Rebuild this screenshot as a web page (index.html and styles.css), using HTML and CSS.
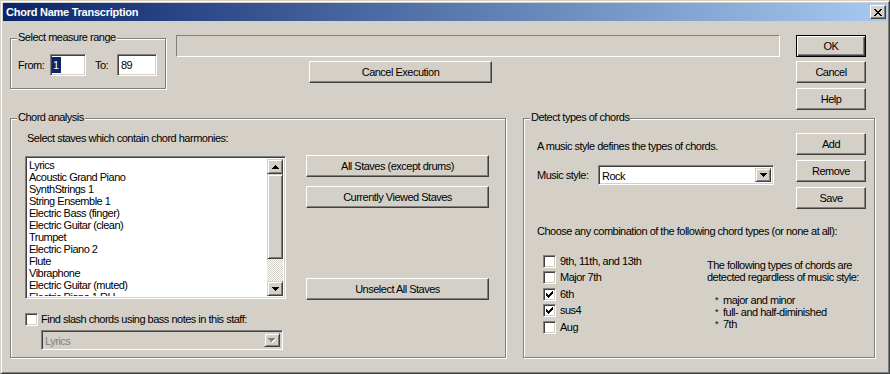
FILE: index.html
```html
<!DOCTYPE html>
<html>
<head>
<meta charset="utf-8">
<title>Chord Name Transcription</title>
<link rel="stylesheet" href="styles.css">
</head>
<body>
<div class="window">
  <div class="titlebar">
    <span class="title">Chord Name Transcription</span>
    <div class="close">
      <svg width="8" height="7" viewBox="0 0 8 7" shape-rendering="crispEdges"><path d="M0 0h2v1H0z M6 0h2v1H6z M1 1h2v1H1z M5 1h2v1H5z M2 2h4v1H2z M3 3h2v1H3z M2 4h4v1H2z M1 5h2v1H1z M5 5h2v1H5z M0 6h2v1H0z M6 6h2v1H6z" fill="#000"/></svg>
    </div>
  </div>
  <div class="client">
    <div class="top-row">
      <div class="group range">
        <span class="legend">Select measure range</span>
        <div class="range-row">
          <span class="lbl-from">From:</span>
          <div class="edit edit-from"><span class="sel">1</span></div>
          <span class="lbl-to">To:</span>
          <div class="edit edit-to">89</div>
        </div>
      </div>
      <div class="progress-col">
        <div class="progress"></div>
        <div class="btn exec">Cancel Execution</div>
      </div>
      <div class="dlg-btns">
        <div class="btn default">OK</div>
        <div class="btn btn-cancel">Cancel</div>
        <div class="btn btn-help">Help</div>
      </div>
    </div>

    <div class="bottom-row">
      <div class="group analysis">
        <span class="legend">Chord analysis</span>
        <div class="intro">Select staves which contain chord harmonies:</div>
        <div class="staves-row">
          <div class="listbox">
            <div class="items">
              <div class="item">Lyrics</div>
              <div class="item">Acoustic Grand Piano</div>
              <div class="item">SynthStrings 1</div>
              <div class="item">String Ensemble 1</div>
              <div class="item">Electric Bass (finger)</div>
              <div class="item">Electric Guitar (clean)</div>
              <div class="item">Trumpet</div>
              <div class="item">Electric Piano 2</div>
              <div class="item">Flute</div>
              <div class="item">Vibraphone</div>
              <div class="item">Electric Guitar (muted)</div>
              <div class="item">Electric Piano 1 RH</div>
            </div>
            <div class="scrollbar">
              <div class="sb-btn sb-up"><svg width="7" height="4" viewBox="0 0 7 4" shape-rendering="crispEdges"><path d="M3 0h1v1H3z M2 1h3v1H2z M1 2h5v1H1z M0 3h7v1H0z" fill="#000"/></svg></div>
              <div class="sb-thumb"></div>
              <div class="sb-track"></div>
              <div class="sb-btn sb-down"><svg width="7" height="4" viewBox="0 0 7 4" shape-rendering="crispEdges"><path d="M0 0h7v1H0z M1 1h5v1H1z M2 2h3v1H2z M3 3h1v1H3z" fill="#000"/></svg></div>
            </div>
          </div>
          <div class="staff-btns">
            <div class="btn wide">All Staves (except drums)</div>
            <div class="btn wide b-viewed">Currently Viewed Staves</div>
            <div class="btn wide b-unselect">Unselect All Staves</div>
          </div>
        </div>
        <div class="check-row slash-row">
          <div class="checkbox"></div>
          <span class="check-label">Find slash chords using bass notes in this staff:</span>
        </div>
        <div class="combo disabled bass-combo">
          <span class="combo-text">Lyrics</span>
          <div class="combo-btn"><svg width="8" height="5" viewBox="0 0 8 5" shape-rendering="crispEdges"><path d="M1 1h7v1H1z M2 2h5v1H2z M3 3h3v1H3z M4 4h1v1H4z" fill="#fff"/><path d="M0 0h7v1H0z M1 1h5v1H1z M2 2h3v1H2z M3 3h1v1H3z" fill="#808080"/></svg></div>
        </div>
      </div>

      <div class="group detect">
        <span class="legend">Detect types of chords</span>
        <div class="style-area">
          <div class="style-left">
            <div class="style-intro">A music style defines the types of chords.</div>
            <div class="style-row">
              <span class="style-lbl">Music style:</span>
              <div class="combo style-combo">
                <span class="combo-text">Rock</span>
                <div class="combo-btn"><svg width="7" height="4" viewBox="0 0 7 4" shape-rendering="crispEdges"><path d="M0 0h7v1H0z M1 1h5v1H1z M2 2h3v1H2z M3 3h1v1H3z" fill="#000"/></svg></div>
              </div>
            </div>
          </div>
          <div class="style-btns">
            <div class="btn">Add</div>
            <div class="btn b-gap">Remove</div>
            <div class="btn b-gap">Save</div>
          </div>
        </div>
        <div class="choose">Choose any combination of the following chord types (or none at all):</div>
        <div class="types-area">
          <div class="types">
            <div class="check-row type"><div class="checkbox"></div><span class="check-label">9th, 11th, and 13th</span></div>
            <div class="check-row type"><div class="checkbox"></div><span class="check-label">Major 7th</span></div>
            <div class="check-row type"><div class="checkbox checked"><svg width="7" height="7" viewBox="0 0 7 7" shape-rendering="crispEdges"><path d="M6 0h1v1H6z M5 1h2v1H5z M0 2h1v1H0z M4 2h3v1H4z M0 3h2v1H0z M3 3h3v1H3z M0 4h5v1H0z M1 5h3v1H1z M2 6h1v1H2z" fill="#000"/></svg></div><span class="check-label">6th</span></div>
            <div class="check-row type"><div class="checkbox checked"><svg width="7" height="7" viewBox="0 0 7 7" shape-rendering="crispEdges"><path d="M6 0h1v1H6z M5 1h2v1H5z M0 2h1v1H0z M4 2h3v1H4z M0 3h2v1H0z M3 3h3v1H3z M0 4h5v1H0z M1 5h3v1H1z M2 6h1v1H2z" fill="#000"/></svg></div><span class="check-label">sus4</span></div>
            <div class="check-row type"><div class="checkbox"></div><span class="check-label">Aug</span></div>
          </div>
          <div class="always">
            <div class="always-intro">The following types of chords are<br>detected regardless of music style:</div>
            <ul class="bullets">
              <li><span class="star">*</span>major and minor</li>
              <li><span class="star">*</span>full- and half-diminished</li>
              <li><span class="star">*</span>7th</li>
            </ul>
          </div>
        </div>
      </div>
    </div>
  </div>
</div>
</body>
</html>
```

FILE: styles.css
```css
* { box-sizing: border-box; }
html, body { margin: 0; padding: 0; }
body {
  width: 890px;
  height: 374px;
  overflow: hidden;
  background: #d4d0c8;
  color: #000;
  font-family: "Liberation Sans", Arial, sans-serif;
  font-size: 11px;
  letter-spacing: -0.5px;
  line-height: 13px;
}

.window {
  width: 890px;
  height: 374px;
  border: 1px solid;
  border-color: #d4d0c8 #404040 #404040 #d4d0c8;
  box-shadow: inset 1px 1px #fff, inset -1px -1px #808080;
  padding: 2px;
  display: flex;
  flex-direction: column;
}

.titlebar {
  flex: none;
  height: 18px;
  background: linear-gradient(to right, #0a246a, #a6caf0);
  display: flex;
  align-items: center;
  padding: 0 1px 0 3px;
}
.title {
  flex: 1;
  color: #fff;
  font-weight: bold;
  letter-spacing: -0.25px;
}
.close {
  width: 16px;
  height: 14px;
  background: #d4d0c8;
  border: 1px solid;
  border-color: #fff #404040 #404040 #fff;
  box-shadow: inset -1px -1px #808080;
  display: flex;
  align-items: center;
  justify-content: center;
}
.close svg { display: block; }

.client {
  flex: 1;
  padding: 14px 0 0 7px;
  display: flex;
  flex-direction: column;
}

/* etched group box */
.group {
  position: relative;
  flex: none;
  border: 1px solid #808080;
  box-shadow: 1px 1px 0 #fff, inset 1px 1px 0 #fff;
}
.legend {
  position: absolute;
  top: -8px;
  left: 6px;
  padding: 0 1px;
  background: #d4d0c8;
  white-space: nowrap;
}

/* raised push button */
.btn {
  flex: none;
  height: 22px;
  background: #d4d0c8;
  border: 1px solid;
  border-color: #fff #404040 #404040 #fff;
  box-shadow: inset -1px -1px #808080;
  display: flex;
  align-items: center;
  justify-content: center;
  white-space: nowrap;
}
.btn.default {
  border-color: #000;
  box-shadow: inset 1px 1px #fff, inset -1px -1px #404040, inset -2px -2px #808080;
}

/* sunken field */
.edit, .listbox, .combo, .checkbox {
  border: 1px solid;
  border-color: #808080 #fff #fff #808080;
  box-shadow: inset 1px 1px #404040, inset -1px -1px #d4d0c8;
  background: #fff;
}

/* ---- top row ---- */
.top-row {
  display: flex;
  align-items: flex-start;
  flex: none;
}
.range {
  width: 156px;
  height: 51px;
  margin-top: 3px;
  padding: 15px 0 0 7px;
}
.range-row {
  display: flex;
  align-items: center;
  height: 22px;
}
.lbl-from { width: 32px; flex: none; }
.lbl-to { width: 22px; flex: none; margin-left: 9px; }
.edit {
  flex: none;
  height: 22px;
  padding: 2px 0 0 2px;
  line-height: 16px;
}
.edit-from { width: 36px; padding-left: 1px; }
.edit-to { width: 40px; padding-left: 3px; }
.sel {
  display: inline-block;
  background: #0a246a;
  color: #fff;
  padding: 0 2px 0 1px;
  height: 16px;
}

.progress-col {
  flex: none;
  width: 604px;
  margin-left: 10px;
  display: flex;
  flex-direction: column;
}
.progress {
  height: 22px;
  border: 1px solid;
  border-color: #808080 #fff #fff #808080;
}
.exec {
  width: 183px;
  margin: 4px 0 0 133px;
}

.dlg-btns {
  flex: none;
  width: 70px;
  margin-left: 16px;
  display: flex;
  flex-direction: column;
}
.btn-cancel { margin-top: 4px; }
.btn-help { margin-top: 5px; }

/* ---- bottom row ---- */
.bottom-row {
  display: flex;
  margin-top: 8px;
}

.analysis {
  width: 496px;
  height: 240px;
  padding: 13px 0 0 14px;
}
.intro { margin-left: 2px; }
.staves-row {
  display: flex;
  align-items: flex-start;
  margin-top: 11px;
}
.listbox {
  flex: none;
  width: 261px;
  height: 143px;
  padding: 2px;
  display: flex;
}
.items {
  flex: 1;
  overflow: hidden;
  padding-left: 1px;
}
.item {
  height: 12px;
  line-height: 12px;
  white-space: nowrap;
}
.scrollbar {
  flex: none;
  width: 16px;
  display: flex;
  flex-direction: column;
}
.sb-btn, .sb-thumb, .combo-btn {
  background: #d4d0c8;
  border: 1px solid;
  border-color: #d4d0c8 #404040 #404040 #d4d0c8;
  box-shadow: inset 1px 1px #fff, inset -1px -1px #808080;
}
.sb-btn {
  flex: none;
  height: 15px;
  display: flex;
  align-items: center;
  justify-content: center;
}
.sb-btn svg, .combo-btn svg, .checkbox svg { display: block; }
.sb-thumb { flex: none; height: 85px; }
.sb-track {
  flex: 1;
  background-image: repeating-conic-gradient(#fff 0 25%, #d4d0c8 0 50%);
  background-size: 2px 2px;
}

.staff-btns {
  flex: none;
  margin: -1px 0 0 20px;
  display: flex;
  flex-direction: column;
}
.wide { width: 183px; }
.b-viewed { margin-top: 9px; }
.b-unselect { margin-top: 70px; }

.check-row {
  display: flex;
  align-items: center;
}
.checkbox {
  flex: none;
  width: 13px;
  height: 13px;
  display: flex;
  align-items: center;
  justify-content: center;
}
.check-label { margin-left: 4px; white-space: nowrap; }
.slash-row { margin-top: 13px; height: 13px; }
.slash-row .check-label { margin-left: 3px; }

.combo {
  display: flex;
  align-items: stretch;
  height: 20px;
  padding: 2px;
}
.combo-text {
  flex: 1;
  padding-left: 1px;
  line-height: 16px;
  white-space: nowrap;
}
.combo-btn {
  flex: none;
  width: 16px;
  display: flex;
  align-items: center;
  justify-content: center;
}
.combo.disabled { background: #d4d0c8; }
.combo.disabled .combo-text { color: #808080; }
.bass-combo {
  width: 242px;
  margin: 4px 0 0 16px;
}

.detect {
  width: 352px;
  height: 240px;
  margin-left: 17px;
  padding: 14px 8px 0 13px;
}
.style-area {
  display: flex;
  align-items: flex-start;
}
.style-left { flex: 1; }
.style-intro { margin-top: 7px; }
.style-row {
  display: flex;
  align-items: center;
  margin-top: 12px;
}
.style-lbl { width: 61px; flex: none; }
.style-combo { width: 176px; flex: none; }
.style-btns {
  flex: none;
  width: 70px;
  display: flex;
  flex-direction: column;
}
.b-gap { margin-top: 5px; }

.choose { margin-top: 16px; white-space: nowrap; }

.types-area {
  display: flex;
  align-items: flex-start;
  margin-top: 15px;
}
.types {
  flex: none;
  width: 170px;
  padding-left: 6px;
}
.type { height: 16.5px; }
.always {
  flex: none;
  margin-top: 6px;
  line-height: 12px;
}
.bullets {
  list-style: none;
  margin: 11px 0 0;
  padding: 0;
}
.star {
  display: inline-block;
  width: 16px;
  padding-left: 8px;
  font-size: 9px;
  vertical-align: top;
  line-height: 12px;
}
```
